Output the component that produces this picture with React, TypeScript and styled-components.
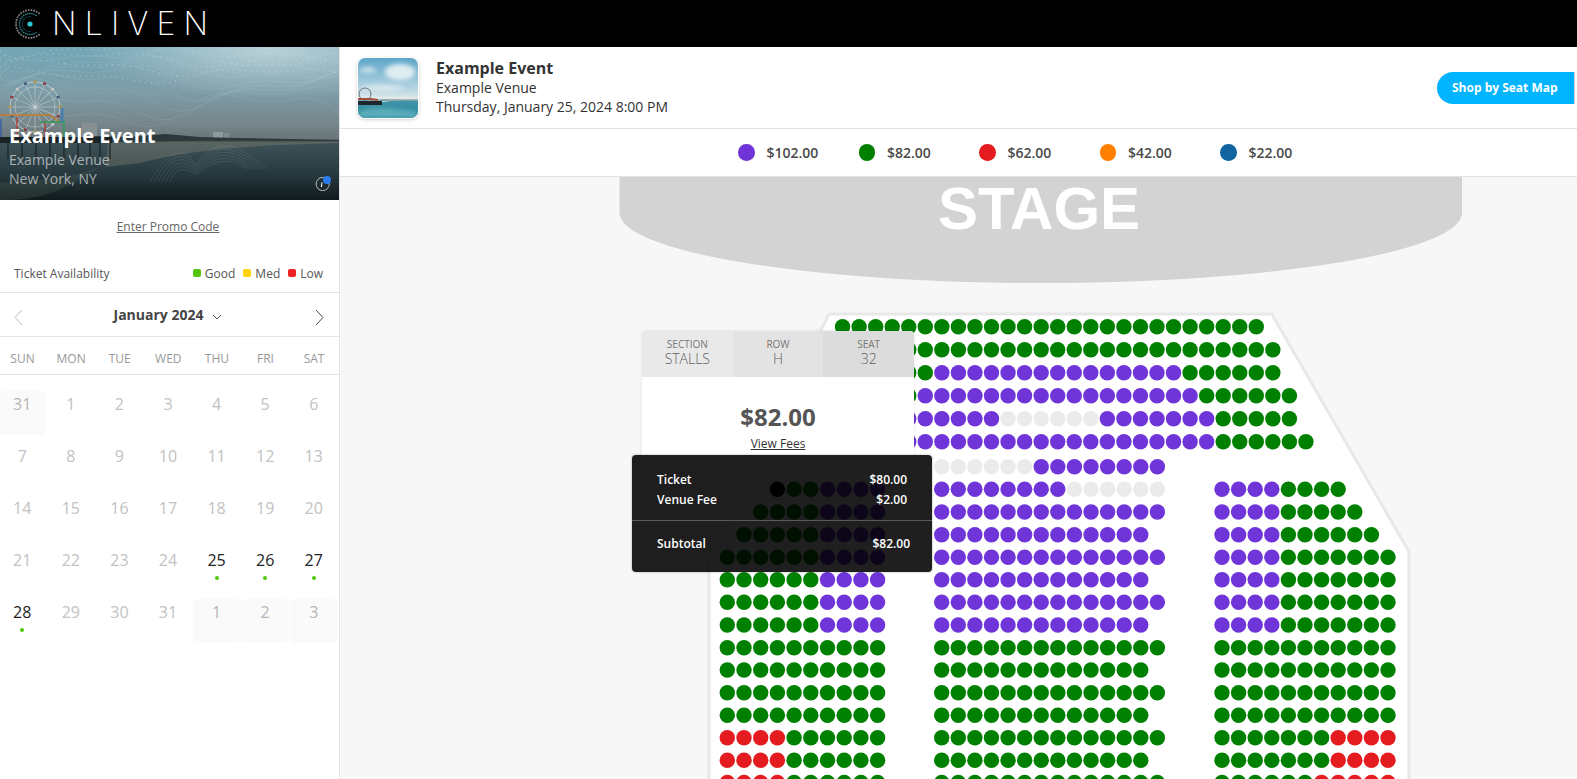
import styled, { createGlobalStyle } from 'styled-components';

const GlobalStyle = createGlobalStyle`
  html, body {
    margin: 0;
    padding: 0;
    height: 100%;
    overflow: hidden;
    background: #fff;
    font-family: "Open Sans", "Noto Sans", sans-serif;
  }
  * { box-sizing: border-box; }
`;

const Page = styled.div`
  display: flex;
  flex-direction: column;
  width: 1577px;
  height: 779px;
  overflow: hidden;
`;

const TopBar = styled.header`
  display: flex;
  align-items: center;
  flex: 0 0 47px;
  background: #000;
  padding-left: 15px;
`;

const LogoText = styled.span`
  margin-left: 7px;
  font-family: Inter, sans-serif;
  font-weight: 200;
  font-size: 32px;
  line-height: 47px;
  letter-spacing: 8.2px;
  color: #fff;
`;

const Body = styled.div`
  display: flex;
  flex: 1;
  min-height: 0;
`;

const Sidebar = styled.aside`
  flex: 0 0 340px;
  border-right: 1px solid #e4e4e4;
  overflow: hidden;
`;

const Hero = styled.div`
  position: relative;
  height: 153px;
  background: #33444a;
  overflow: hidden;
`;

const HeroArt = styled.svg`
  position: absolute;
  inset: 0;
  display: block;
`;

const HeroText = styled.div`
  position: absolute;
  left: 9px;
  top: 75px;
`;

const HeroTitle = styled.div`
  font-size: 20px;
  line-height: 28px;
  font-weight: 700;
  color: #fff;
`;

const HeroLine = styled.div`
  font-size: 14px;
  line-height: 19px;
  color: rgba(255, 255, 255, 0.6);
`;

const Promo = styled.a`
  display: block;
  margin-top: 18px;
  padding-right: 3px;
  text-align: center;
  font-size: 12px;
  line-height: 17px;
  color: #666;
  text-decoration: underline;
`;

const Availability = styled.div`
  display: flex;
  align-items: center;
  justify-content: space-between;
  height: 53px;
  margin-top: 5px;
  padding: 14px 16px 0 14px;
  font-size: 12px;
  color: #555;
  border-bottom: 1px solid #e4e4e4;
`;

const LevelList = styled.div`
  display: flex;
  gap: 8px;
`;

const Level = styled.span<{ $color: string }>`
  display: flex;
  align-items: center;
  gap: 4px;
  &::before {
    content: '';
    width: 8px;
    height: 8px;
    border-radius: 2px;
    background: ${(p) => p.$color};
  }
`;

const MonthBar = styled.div`
  display: flex;
  align-items: center;
  justify-content: space-between;
  height: 44px;
  padding: 0 15px 0 14px;
  border-bottom: 1px solid #e4e4e4;
`;

const MonthTitle = styled.div`
  display: flex;
  align-items: center;
  gap: 9px;
  margin-right: 2px;
  font-size: 14px;
  font-weight: 700;
  color: #444;
`;

const Weekdays = styled.div`
  display: grid;
  grid-template-columns: repeat(7, 48.6px);
  margin-left: -1.8px;
  height: 37px;
  padding-top: 5px;
  align-items: center;
  width: 345px;
  font-size: 12px;
  color: #999;
  text-align: center;
`;

const WeekRule = styled.div`
  border-bottom: 1px solid #e4e4e4;
`;

const Days = styled.div`
  display: grid;
  grid-template-columns: repeat(7, 48px);
  column-gap: 0.6px;
  row-gap: 8px;
  margin-left: -1.8px;
  padding-top: 16px;
  width: 345px;
`;

const Day = styled.div<{ $on?: boolean; $shade?: boolean }>`
  height: 44px;
  border-radius: 4px;
  text-align: center;
  font-size: 16px;
  line-height: 26px;
  color: ${(p) => (p.$on ? '#222' : p.$shade ? '#b5b5b5' : '#c2c2c2')};
  background: ${(p) => (p.$shade ? '#fafafa' : 'transparent')};
`;

const DayDot = styled.div`
  width: 4px;
  height: 4px;
  margin: 3px auto 0;
  border-radius: 50%;
  background: #4fc80a;
`;

const Main = styled.main`
  display: flex;
  flex-direction: column;
  flex: 1;
  min-width: 0;
`;

const EventBar = styled.div`
  display: flex;
  align-items: center;
  flex: 0 0 82px;
  padding: 0 2px 0 18px;
  border-bottom: 1px solid #e2e2e2;
`;

const Thumb = styled.svg`
  flex: 0 0 auto;
  display: block;
  border-radius: 7px;
  box-shadow: 0 0 0 1px #fff, 0 1px 4px rgba(0, 0, 0, 0.28);
`;

const EventInfo = styled.div`
  flex: 1;
  margin-left: 18px;
  padding-bottom: 2px;
  color: #333;
  font-size: 14px;
  line-height: 19px;
`;

const EventName = styled.div`
  font-size: 16px;
  line-height: 20px;
  font-weight: 700;
`;

const SeatMapButton = styled.button`
  width: 138px;
  height: 32px;
  padding: 0 0 0 15px;
  border: 0;
  border-right: 1px solid #ccc;
  border-radius: 16px 0 0 16px;
  background: #00b4ff;
  color: #fff;
  font-family: inherit;
  font-size: 12px;
  font-weight: 700;
  text-align: left;
`;

const PriceBar = styled.div`
  display: flex;
  align-items: center;
  flex: 0 0 48px;
  padding-left: 398px;
  border-bottom: 1px solid #e2e2e2;
`;

const Price = styled.div<{ $color: string }>`
  display: flex;
  align-items: center;
  gap: 12px;
  width: 120.5px;
  font-size: 14px;
  font-weight: 600;
  color: #4a4a4a;
  &::before {
    content: '';
    width: 16.5px;
    height: 16.5px;
    border-radius: 50%;
    background: ${(p) => p.$color};
  }
`;

const MapArea = styled.div`
  position: relative;
  flex: 1;
  background: #f7f7f7;
  overflow: hidden;
`;

const MapArt = styled.svg`
  display: block;
`;

const SeatCard = styled.div`
  position: absolute;
  left: 302px;
  top: 154px;
  width: 272px;
  height: 141px;
  background: #fff;
  border-radius: 4px;
  box-shadow: 0 0 3px rgba(0, 0, 0, 0.12);
  text-align: center;
  &::after {
    content: '';
    position: absolute;
    left: 125px;
    bottom: -9px;
    border-left: 10px solid transparent;
    border-right: 10px solid transparent;
    border-top: 9px solid #fff;
  }
`;

const SeatHead = styled.div`
  display: grid;
  grid-template-columns: repeat(3, 1fr);
  height: 46px;
`;

const SeatCol = styled.div<{ $bg: string }>`
  padding-top: 7px;
  background: ${(p) => p.$bg};
  color: #606060;
  font-size: 14px;
  font-weight: 300;
  line-height: 17px;
  &:first-child { border-top-left-radius: 4px; }
  &:last-child { border-top-right-radius: 4px; }
`;

const SeatLabel = styled.div`
  font-size: 10px;
  font-weight: 400;
  line-height: 12px;
  color: #777;
`;

const SeatPrice = styled.div`
  margin-top: 23px;
  font-size: 24px;
  line-height: 33px;
  font-weight: 700;
  color: #555;
`;

const ViewFees = styled.a`
  display: block;
  margin-top: 2px;
  font-size: 12px;
  line-height: 17px;
  color: #333;
  text-decoration: underline;
`;

const FeeBox = styled.div`
  position: absolute;
  left: 292px;
  top: 278px;
  width: 300px;
  height: 117px;
  padding-top: 15px;
  border-radius: 4px;
  background: rgba(0, 0, 0, 0.88);
  box-shadow: 0 0 2px rgba(0, 0, 0, 0.4);
  color: #fff;
  font-size: 12px;
  font-weight: 600;
`;

const FeeRow = styled.div<{ $right?: number }>`
  display: flex;
  justify-content: space-between;
  height: 20px;
  line-height: 20px;
  padding: 0 ${(p) => p.$right ?? 25}px 0 25px;
`;

const FeeRule = styled.div`
  height: 1px;
  margin: 10px 0 13px;
  background: #5a5a5a;
`;

type Row = { y: number; x: number; pitch: number; seats: string };

const seatColors: Record<string, string> = {
  g: '#008000',
  p: '#6f35d9',
  r: '#e51c1f',
  e: '#ebebeb',
  k: '#000',
};

const upper = (y: number, from: number, seats: string): Row => ({
  y,
  x: 925.3 + from * 16.55,
  pitch: 16.55,
  seats,
});
const left = (y: number, from: number, seats: string): Row => ({
  y,
  x: 727.3 + from * 16.7,
  pitch: 16.7,
  seats,
});
const centre = (y: number, seats: string): Row => ({ y, x: 941.7, pitch: 16.59, seats });
const right = (y: number, seats: string): Row => ({ y, x: 1222, pitch: 16.6, seats });

const rows: Row[] = [
  upper(326.7, -5, '26g'),
  upper(349.7, -6, '28g'),
  upper(372.7, -6, '7g15p6g'),
  upper(395.7, -7, '7g17p6g'),
  upper(418.7, -7, '12p6e7p5g'),
  upper(441.7, -7, '25p6g'),
  centre(466.7, '6e8p'),
  centre(489.3, '8p6e'),
  centre(512, '14p'),
  centre(534.7, '13p'),
  centre(557.3, '14p'),
  centre(579.7, '13p'),
  centre(602.3, '14p'),
  centre(625, '13p'),
  centre(647.7, '14g'),
  centre(670, '13g'),
  centre(692.7, '14g'),
  centre(715.3, '13g'),
  centre(737.7, '14g'),
  centre(760.3, '13g'),
  centre(782.5, '14g'),
  left(489.3, 3, '1k2g4p'),
  left(512, 2, '4g4p'),
  left(534.7, 1, '5g4p'),
  left(557.3, 0, '6g4p'),
  left(579.7, 0, '6g4p'),
  left(602.3, 0, '6g4p'),
  left(625, 0, '6g4p'),
  left(647.7, 0, '10g'),
  left(670, 0, '10g'),
  left(692.7, 0, '10g'),
  left(715.3, 0, '10g'),
  left(737.7, 0, '4r6g'),
  left(760.3, 0, '4r6g'),
  left(782.5, 0, '4r6g'),
  right(489.3, '4p4g'),
  right(512, '4p5g'),
  right(534.7, '4p6g'),
  right(557.3, '4p7g'),
  right(579.7, '4p7g'),
  right(602.3, '4p7g'),
  right(625, '4p7g'),
  right(647.7, '11g'),
  right(670, '11g'),
  right(692.7, '11g'),
  right(715.3, '11g'),
  right(737.7, '7g4r'),
  right(760.3, '7g4r'),
  right(782.5, '6g5r'),
];

function expandSeats(seats: string) {
  const out: string[] = [];
  for (const m of seats.matchAll(/(\d+)([a-z])/g)) {
    for (let i = 0; i < Number(m[1]); i++) out.push(m[2]);
  }
  return out;
}

function SeatMap() {
  return (
    <MapArt width={1237} height={602} viewBox="340 177 1237 602">
      <path d="M619.5 170V213A421.2 70 0 0 0 1462 213V170Z" fill="#d3d3d3" />
      <text
        x={1039}
        y={229}
        textAnchor="middle"
        fontFamily='"Liberation Sans", Arial, sans-serif'
        fontWeight={700}
        fontSize={60}
        fill="#fff"
      >
        STAGE
      </text>
      <path d="M709 800V553L829 314H1271.7L1409 551.7V800Z" fill="#fff" stroke="#e8e8e8" strokeWidth={3} />
      {rows.map((r) =>
        expandSeats(r.seats).map((c, i) => (
          <circle key={`${r.x}-${r.y}-${i}`} cx={r.x + i * r.pitch} cy={r.y} r={7.7} fill={seatColors[c]} />
        )),
      )}
    </MapArt>
  );
}

function LogoMark() {
  const ring = (r: number, n: number, size: number, color: string, from: number, to: number) =>
    Array.from({ length: n }, (_, i) => {
      const a = ((from + ((to - from) * i) / (n - 1)) * Math.PI) / 180;
      return <circle key={`${r}-${i}`} cx={15 + r * Math.cos(a)} cy={15 + r * Math.sin(a)} r={size} fill={color} />;
    });
  return (
    <svg width={30} height={30} viewBox="0 0 30 30" style={{ flex: 'none' }}>
      {ring(14, 24, 1.05, '#777', 50, 310)}
      {ring(10.5, 22, 0.7, '#2fb7c6', 55, 305)}
      {ring(7.5, 14, 0.5, '#1d7f8c', 90, 270)}
      <circle cx={15} cy={15} r={2.6} fill="#2fc4d3" />
    </svg>
  );
}

function waveLine(y: number, amp: number, phase: number, len: number) {
  let d = `M0 ${y}`;
  for (let x = 10; x <= len; x += 10) {
    d += `L${x} ${(y + amp * Math.sin(x / 42 + phase) + (amp / 2) * Math.sin(x / 17 + phase)).toFixed(1)}`;
  }
  return d;
}

function HeroPicture() {
  const spokes = Array.from({ length: 16 }, (_, i) => (i * Math.PI) / 8);
  return (
    <HeroArt width={339} height={153} viewBox="0 0 339 153" preserveAspectRatio="none">
      <defs>
        <linearGradient id="heroSky" x1="0" y1="0" x2="0" y2="1">
          <stop offset="0" stopColor="#74a7b8" />
          <stop offset="0.3" stopColor="#7d9ca7" />
          <stop offset="0.5" stopColor="#76868b" />
          <stop offset="0.6" stopColor="#6a7679" />
          <stop offset="0.62" stopColor="#3e5358" />
          <stop offset="0.85" stopColor="#24363b" />
          <stop offset="1" stopColor="#111a1d" />
        </linearGradient>
        <radialGradient id="heroCloud" cx="0.8" cy="0.02" r="0.55">
          <stop offset="0" stopColor="#dfe9ea" stopOpacity="0.65" />
          <stop offset="1" stopColor="#dfe9ea" stopOpacity="0" />
        </radialGradient>
      </defs>
      <rect width={339} height={153} fill="url(#heroSky)" />
      <rect width={339} height={90} fill="url(#heroCloud)" />
      <g fill="none" stroke="#dbe8ea" strokeOpacity={0.16} strokeWidth={0.6}>
        {[6, 14, 22, 30, 38, 46, 54, 62].map((y, i) => (
          <path key={y} d={waveLine(y, 7 + i, i * 0.7, 340)} />
        ))}
      </g>
      <g fill="none" stroke="#f2f6f6" strokeOpacity={0.4} strokeWidth={1.2} strokeDasharray="1 5">
        {[4, 12, 20, 28].map((y, i) => (
          <path key={y} d={waveLine(y, 6, 1.5 + i, 340)} />
        ))}
      </g>
      <rect x={82} y={76} width={15} height={14} fill="#868f92" />
      <rect x={213} y={85} width={10} height={7} fill="#8d9ba1" />
      <rect x={224} y={86} width={5} height={6} fill="#7f8c91" />
      <path d="M65 91L100 89L130 90L165 87L200 90L240 91L339 93V95H65Z" fill="#2b393d" />
      <path d="M108 96C160 93 260 94 339 94V96C260 98 190 102 140 116L106 120Z" fill="#7c8074" opacity={0.4} />
      <g fill="none" stroke="#e2e8e8" strokeOpacity={0.7} strokeWidth={0.6}>
        <circle cx={35} cy={60} r={25} strokeWidth={0.9} />
        <circle cx={35} cy={60} r={20} />
        {spokes.map((a) => (
          <line key={a} x1={35} y1={60} x2={35 + 25 * Math.cos(a)} y2={60 + 25 * Math.sin(a)} />
        ))}
      </g>
      {spokes.map((a, i) => (
        <rect
          key={a}
          x={33.5 + 25 * Math.cos(a)}
          y={58.5 + 25 * Math.sin(a)}
          width={3}
          height={2.5}
          fill={['#b2954c', '#8f3a40', '#c4c6c2', '#3f5c7c'][i % 4]}
        />
      ))}
      <g fill="none" strokeWidth={1.5}>
        <path d="M0 68H50L58 74" stroke="#c9792a" />
        <path d="M1 72V90" stroke="#3c5ea8" />
        <path d="M17 70V90M45 74V90" stroke="#a8453e" />
        <path d="M40 75H64V92" stroke="#2f9a50" />
        <path d="M62 61V75" stroke="#4a7fae" strokeWidth={3} />
      </g>
      <rect x={0} y={90} width={112} height={6} fill="#1b2326" />
      <g stroke="#1b2326" strokeWidth={1.2}>
        {[8, 22, 36, 50, 64, 78, 90, 100, 110].map((x) => (
          <line key={x} x1={x} y1={96} x2={x} y2={112} />
        ))}
      </g>
      <g fill="none" stroke="#cfd6d6" strokeOpacity={0.2} strokeWidth={0.6}>
        {[0, 1, 2, 3, 4, 5].map((i) => (
          <path
            key={i}
            d={`M${150 + i * 4} 135C${170 + i} ${100 + i * 4} ${185} ${100 + i * 4} ${196} ${118 + i * 2}C${208} ${100 + i * 4} ${226 - i} ${85 + i * 4} ${268 - i * 4} 122`}
          />
        ))}
      </g>
      <path d="M0 153V136C30 132 60 135 100 120C60 146 40 153 0 153Z" fill="#667066" opacity={0.22} />
      <circle cx={322.7} cy={137} r={6.6} fill="none" stroke="#d9dede" strokeWidth={0.8} />
      <path d="M322 135.5L321.4 140" stroke="#fff" strokeWidth={1.1} />
      <circle cx={327} cy={133} r={4} fill="#2a7cf0" />
    </HeroArt>
  );
}

function ThumbPicture() {
  return (
    <Thumb width={60} height={60} viewBox="0 0 60 60">
      <defs>
        <linearGradient id="thumbSky" x1="0" y1="0" x2="0" y2="1">
          <stop offset="0" stopColor="#5ea6c9" />
          <stop offset="0.55" stopColor="#bcd8e4" />
          <stop offset="0.68" stopColor="#e3ebe8" />
          <stop offset="0.72" stopColor="#3e94a8" />
          <stop offset="1" stopColor="#2b8899" />
        </linearGradient>
        <filter id="thumbSoft">
          <feGaussianBlur stdDeviation="2" />
        </filter>
      </defs>
      <rect width={60} height={60} fill="url(#thumbSky)" />
      <g filter="url(#thumbSoft)">
        <ellipse cx={42} cy={14} rx={15} ry={8} fill="#eef4f6" opacity={0.85} />
        <ellipse cx={10} cy={12} rx={8} ry={3} fill="#e8f1f4" opacity={0.7} />
        <ellipse cx={24} cy={30} rx={22} ry={3} fill="#f2f6f7" opacity={0.6} />
        <path d="M0 54C14 48 30 50 60 54V60H0Z" fill="#6dbcc8" opacity={0.7} />
      </g>
      <path d="M22 44C32 42 48 41 60 42" fill="none" stroke="#e8f3f3" strokeWidth={1.2} opacity={0.7} />
      <circle cx={7} cy={36} r={6} fill="none" stroke="#3f4348" strokeWidth={0.7} />
      <path d="M0 41H13L20 42" stroke="#a8503c" strokeWidth={2} fill="none" />
      <rect x={0} y={43} width={24} height={4} fill="#20272a" />
      <path d="M22 42H60" stroke="#74858a" strokeWidth={1} />
    </Thumb>
  );
}

function Chevron({ dir, color }: { dir: 'left' | 'right' | 'down'; color: string }) {
  const d = { left: 'M8 1L1 8.5L8 16', right: 'M1 1L8 8.5L1 16', down: 'M1 1L5 5L9 1' }[dir];
  const small = dir === 'down';
  return (
    <svg width={small ? 10 : 9} height={small ? 6 : 17} fill="none" stroke={color} strokeWidth={1} style={{ marginTop: small ? 5 : 6 }}>
      <path d={d} />
    </svg>
  );
}

const weekdays = ['SUN', 'MON', 'TUE', 'WED', 'THU', 'FRI', 'SAT'];
const days = [31, ...Array.from({ length: 31 }, (_, i) => i + 1), 1, 2, 3];
const prices = [
  { label: '$102.00', color: '#6f35d9' },
  { label: '$82.00', color: '#008000' },
  { label: '$62.00', color: '#e51c1f' },
  { label: '$42.00', color: '#ff8000' },
  { label: '$22.00', color: '#11649f' },
];

export default function App() {
  return (
    <Page>
      <GlobalStyle />
      <TopBar>
        <LogoMark />
        <LogoText>NLIVEN</LogoText>
      </TopBar>
      <Body>
        <Sidebar>
          <Hero>
            <HeroPicture />
            <HeroText>
              <HeroTitle>Example Event</HeroTitle>
              <HeroLine>Example Venue</HeroLine>
              <HeroLine>New York, NY</HeroLine>
            </HeroText>
          </Hero>
          <Promo>Enter Promo Code</Promo>
          <Availability>
            <span>Ticket Availability</span>
            <LevelList>
              <Level $color="#52c40c">Good</Level>
              <Level $color="#ffd400">Med</Level>
              <Level $color="#ee2222">Low</Level>
            </LevelList>
          </Availability>
          <MonthBar>
            <Chevron dir="left" color="#bbb" />
            <MonthTitle>
              January 2024
              <Chevron dir="down" color="#555" />
            </MonthTitle>
            <Chevron dir="right" color="#444" />
          </MonthBar>
          <WeekRule>
            <Weekdays>
              {weekdays.map((w) => (
                <span key={w}>{w}</span>
              ))}
            </Weekdays>
          </WeekRule>
          <Days>
            {days.map((d, i) => {
              const on = i >= 25 && i <= 28;
              return (
                <Day key={i} $on={on} $shade={i === 0 || i > 31}>
                  {d}
                  {on && <DayDot />}
                </Day>
              );
            })}
          </Days>
        </Sidebar>
        <Main>
          <EventBar>
            <ThumbPicture />
            <EventInfo>
              <EventName>Example Event</EventName>
              <div>Example Venue</div>
              <div>Thursday, January 25, 2024 8:00 PM</div>
            </EventInfo>
            <SeatMapButton>Shop by Seat Map</SeatMapButton>
          </EventBar>
          <PriceBar>
            {prices.map((p) => (
              <Price key={p.label} $color={p.color}>
                {p.label}
              </Price>
            ))}
          </PriceBar>
          <MapArea>
            <SeatMap />
            <SeatCard>
              <SeatHead>
                <SeatCol $bg="#e9e9e9">
                  <SeatLabel>SECTION</SeatLabel>
                  STALLS
                </SeatCol>
                <SeatCol $bg="#e3e3e3">
                  <SeatLabel>ROW</SeatLabel>H
                </SeatCol>
                <SeatCol $bg="#dcdcdc">
                  <SeatLabel>SEAT</SeatLabel>32
                </SeatCol>
              </SeatHead>
              <SeatPrice>$82.00</SeatPrice>
              <ViewFees>View Fees</ViewFees>
            </SeatCard>
            <FeeBox>
              <FeeRow>
                <span>Ticket</span>
                <span>$80.00</span>
              </FeeRow>
              <FeeRow>
                <span>Venue Fee</span>
                <span>$2.00</span>
              </FeeRow>
              <FeeRule />
              <FeeRow $right={22}>
                <span>Subtotal</span>
                <span>$82.00</span>
              </FeeRow>
            </FeeBox>
          </MapArea>
        </Main>
      </Body>
    </Page>
  );
}
